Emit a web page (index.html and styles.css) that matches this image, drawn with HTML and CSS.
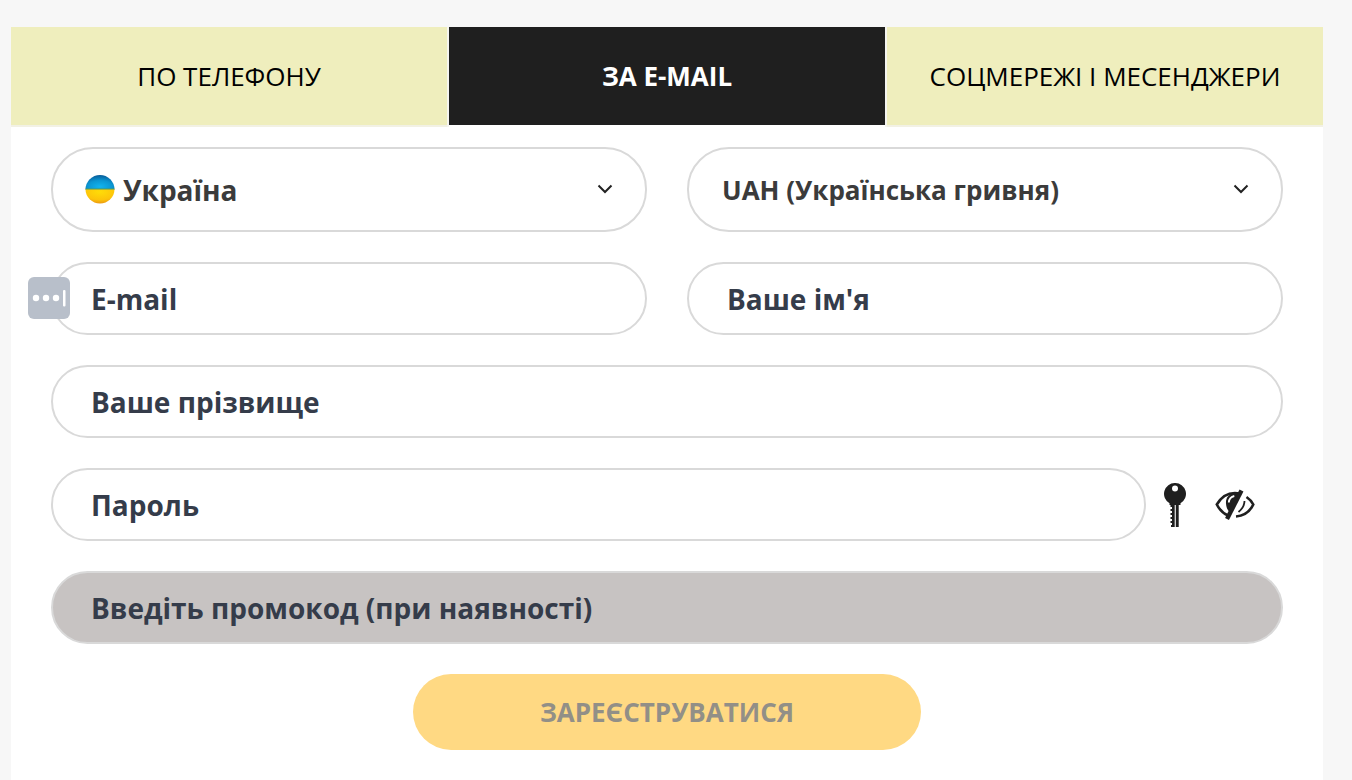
FILE: index.html
```html
<!DOCTYPE html>
<html lang="uk">
<head>
<meta charset="utf-8">
<meta name="viewport" content="width=device-width, initial-scale=1">
<title>Реєстрація</title>
<link rel="stylesheet" href="styles.css">
</head>
<body>
<main class="panel">
  <nav class="tabs" role="tablist">
    <button class="tab" type="button" role="tab" aria-selected="false">ПО ТЕЛЕФОНУ</button>
    <button class="tab tab-active" type="button" role="tab" aria-selected="true">ЗА E-MAIL</button>
    <button class="tab" type="button" role="tab" aria-selected="false">СОЦМЕРЕЖІ І МЕСЕНДЖЕРИ</button>
  </nav>
  <form class="form">
    <div class="row">
      <div class="select-box">
        <select class="field select select-country" aria-label="Країна"><option>Україна</option></select>
        <svg class="flag" viewBox="0 0 30 30" aria-hidden="true">
          <defs>
            <radialGradient id="blue" cx=".5" cy=".8" r=".85"><stop offset="0" stop-color="#12b4ee"/><stop offset=".5" stop-color="#0b96d2"/><stop offset="1" stop-color="#07528f"/></radialGradient>
            <radialGradient id="gold" cx=".5" cy=".2" r=".9"><stop offset="0" stop-color="#ffdc08"/><stop offset=".6" stop-color="#fdc40a"/><stop offset="1" stop-color="#e48a12"/></radialGradient>
          </defs>
          <path d="M.5 15.500a14.500 14.500 0 0 1 29 0z" fill="url(#blue)"/>
          <path d="M.5 15a14.500 14.500 0 0 0 29 0z" fill="url(#gold)"/>
          <path d="M.5 15h29" stroke="#4f9a62" stroke-width="1"/>
        </svg>
        <svg class="chevron" viewBox="0 0 16 10" aria-hidden="true"><path d="M1.500 1.500 8 8l6.500-6.500"/></svg>
      </div>
      <div class="select-box">
        <select class="field select" aria-label="Валюта"><option>UAH (Українська гривня)</option></select>
        <svg class="chevron" viewBox="0 0 16 10" aria-hidden="true"><path d="M1.500 1.500 8 8l6.500-6.500"/></svg>
      </div>
    </div>
    <div class="row">
      <div class="input-box">
        <input class="field input" type="email" placeholder="E-mail" aria-label="E-mail">
        <svg class="autofill" viewBox="0 0 42 42" aria-hidden="true">
          <rect width="42" height="42" rx="6" fill="#b8bfca"/>
          <g fill="#fff"><circle cx="8" cy="21" r="3.200"/><circle cx="18" cy="21" r="3.200"/><circle cx="28" cy="21" r="3.200"/><rect x="35" y="13" width="2.500" height="16.500" rx="1"/></g>
        </svg>
      </div>
      <input class="field input" type="text" placeholder="Ваше ім'я" aria-label="Ваше ім'я">
    </div>
    <input class="field input" type="text" placeholder="Ваше прізвище" aria-label="Ваше прізвище">
    <div class="password">
      <input class="field input" type="password" placeholder="Пароль" aria-label="Пароль">
      <button class="icon-button key" type="button" aria-label="Згенерувати пароль">
        <svg viewBox="0 0 22 44" width="22" height="44" aria-hidden="true">
          <path fill-rule="evenodd" d="M11 0a10.800 10.800 0 0 1 5.500 20.200V22H5.500v-1.800A10.800 10.800 0 0 1 11 0zm0 2.500a3 3 0 1 0 0 6 3 3 0 0 0 0-6z"/>
          <path d="M6.500 21h4.200v23H7v-2h1v-2H6.500v-2H8v-2H6.500v-2H8v-2H6.500v-2H8v-2H6.500v-2H8v-2H6.500zM11.800 21h2.900v23h-2.900z"/>
        </svg>
      </button>
      <button class="icon-button" type="button" aria-label="Показати пароль">
        <svg viewBox="0 0 40 32" width="40" height="32" aria-hidden="true">
          <path d="M25 4.500Q10 1.500 1.800 15.500 6 23.500 13 26.500" fill="none" stroke="#1f1f1f" stroke-width="2.600"/>
          <path d="M31.500 8q4.500 3 6.800 7.500Q33 26.500 21 27.500" fill="none" stroke="#1f1f1f" stroke-width="2.600"/>
          <path d="M25 4C15 2.500 10.500 8 11 14.500c.3 4 1.500 6.500 3.500 8.500z" fill="#1f1f1f"/>
          <path d="M13.800 13.500q.5-5.500 5.500-6.500" fill="none" stroke="#fff" stroke-width="1.800"/>
          <path d="M26.500 1.500 12 30" fill="none" stroke="#1f1f1f" stroke-width="4.400"/>
          <path d="M29.500 12q0 6-6 11" fill="none" stroke="#1f1f1f" stroke-width="1.800"/>
        </svg>
      </button>
    </div>
    <input class="field input promo" type="text" placeholder="Введіть промокод (при наявності)" aria-label="Введіть промокод (при наявності)">
    <button class="submit" type="submit" disabled>ЗАРЕЄСТРУВАТИСЯ</button>
  </form>
</main>
</body>
</html>
```
FILE: styles.css
```css
* {
  box-sizing: border-box;
}

body {
  margin: 0;
  min-height: 100vh;
  display: flex;
  padding: 27px 29px 0 11px;
  background: #f7f7f7;
  font-family: "Open Sans", "Noto Sans", sans-serif;
}

button,
input,
select {
  margin: 0;
  font-family: inherit;
}

.panel {
  flex: 1;
  min-width: 0;
  background: #fff;
}

.tabs {
  display: grid;
  grid-template-columns: repeat(3, 1fr);
  column-gap: 2px;
  background: #f5f5ef;
}

.tab {
  height: 100px;
  padding: 0;
  border: 0;
  border-bottom: 2px solid #f2f1e4;
  background: #efeebd;
  color: #000;
  font-size: 26px;
  font-weight: 400;
  white-space: nowrap;
}

.tab-active {
  border-bottom-color: #fff;
  background: #1f1f1f;
  color: #fff;
  font-weight: 700;
}

.form {
  display: flex;
  flex-direction: column;
  gap: 30px;
  padding: 20px 40px 28px;
}

.row {
  display: grid;
  grid-template-columns: 1fr 1fr;
  gap: 40px;
}

.select-box,
.input-box {
  position: relative;
}

.field {
  display: block;
  width: 100%;
  min-width: 0;
  border: 2px solid #d9d9d9;
  border-radius: 42px;
  background: #fff;
  outline: 0;
  font-weight: 700;
}

.select {
  height: 85px;
  padding: 0 70px 0 33px;
  appearance: none;
  color: #3b3b3b;
  font-size: 26px;
}

.select-country {
  padding-left: 70px;
  font-size: 28px;
}

.flag {
  position: absolute;
  top: 27px;
  left: 34px;
  width: 30px;
  height: 30px;
}

.chevron {
  position: absolute;
  top: 37px;
  right: 34px;
  width: 16px;
  height: 10px;
  fill: none;
  stroke: #222;
  stroke-width: 2;
  pointer-events: none;
}

.input {
  height: 73px;
  padding: 0 38px;
  color: #353c4a;
  font-size: 28px;
}

.input::placeholder {
  color: #353c4a;
  opacity: 1;
}

.autofill {
  position: absolute;
  top: 15px;
  left: -23px;
  width: 42px;
  height: 42px;
}

.password {
  display: flex;
  align-items: center;
  padding-right: 28px;
}

.password .input {
  flex: 1;
}

.icon-button {
  display: flex;
  padding: 0;
  border: 0;
  background: none;
  fill: #1f1f1f;
}

.key {
  margin: 0 29px 0 18px;
}

.promo {
  background: #c7c3c2;
}

.submit {
  align-self: center;
  width: 508px;
  max-width: 100%;
  height: 76px;
  border: 0;
  border-radius: 38px;
  background: #ffd983;
  color: #928f87;
  font-size: 26px;
  font-weight: 700;
}
```
